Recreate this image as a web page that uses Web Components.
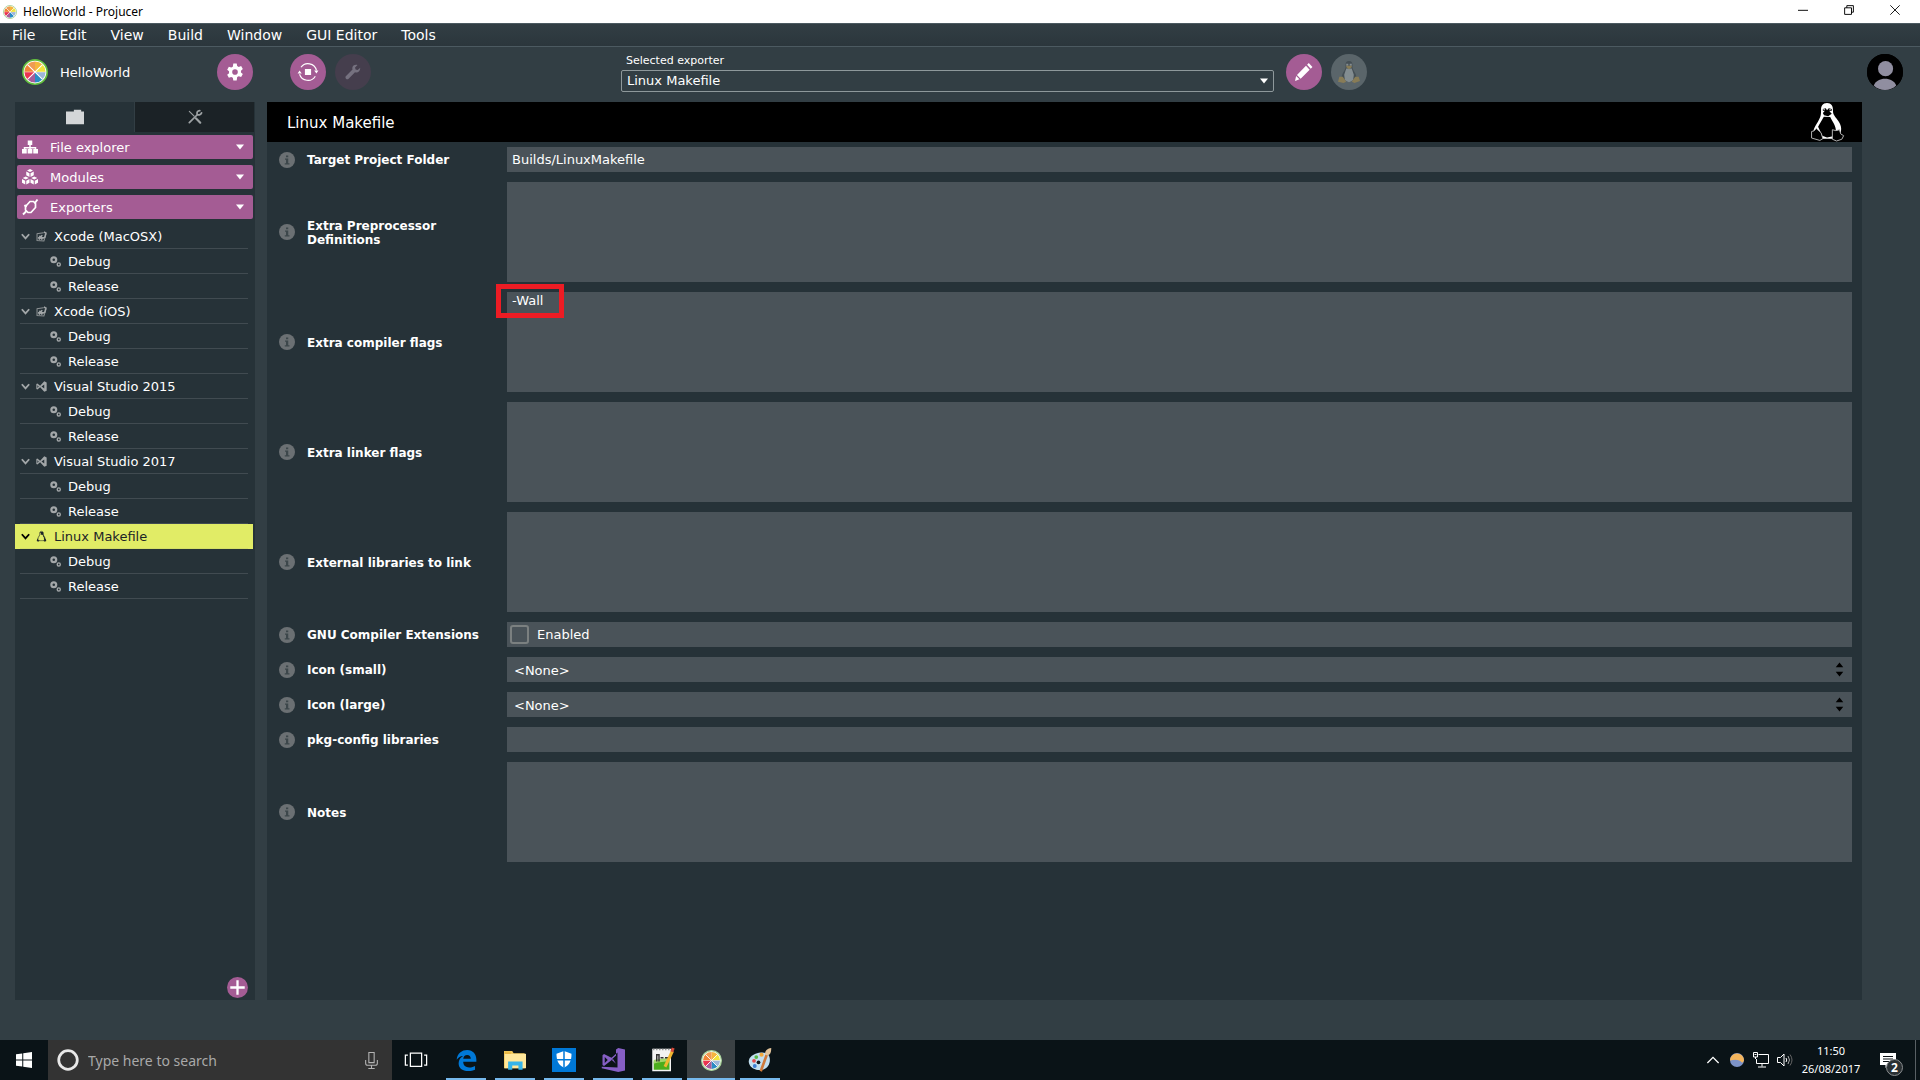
<!DOCTYPE html>
<html lang="en">
<head>
<meta charset="utf-8">
<title>HelloWorld - Projucer</title>
<style>
  html, body { height: 100%; margin: 0; }
  body {
    background: #323e44;
    color: #fff;
    font: 13px/16px "DejaVu Sans", sans-serif;
    overflow: hidden;
  }
</style>
</head>
<body>
<projucer-desktop></projucer-desktop>

<script>
const wedge = ['#f5b63c', '#f2e53c', '#9db6d9', '#2a8cc4', '#a65c9b', '#ea3450', '#f08436', '#f09b52'];
const rim = [[16,3],[25.2,6.8],[29,16],[25.2,25.2],[16,29],[6.8,25.2],[3,16],[6.8,6.8]];
const wheel = outline => `<circle cx="16" cy="16" r="15" fill="#fff" stroke="${outline}" stroke-width="2"/>` +
  rim.map((p, i) => {
    const q = rim[(i + 1) % 8];
    return `<path d="M16 16L${p}A13 13 0 0 1 ${q}Z" fill="${wedge[i]}"/>`;
  }).join('') +
  '<path d="M6.8 6.8L25.2 25.2M25.2 6.8L6.8 25.2" stroke="#fff" stroke-width="1.3"/><path d="M3 16H29" stroke="#fff" stroke-width=".6"/>';

const cube = (x, y) => `<path transform="translate(${x} ${y})" fill="#fff" d="M0-8l6 3-6 3-6-3zM-7.500-3l6.500 3.500V8l-6.500-3.500zM7.500-3L1 .5V8l6.500-3.500z"/>`;
const tuxBody = 'M16 1c-3.400 0-5 2.400-5 5.500 0 3 .3 4.500-1.500 7.500-2 3.300-4.300 6.600-4.300 10.500l3 3.500h15.600l3-3.500c0-3.900-2.300-7.200-4.300-10.500C20.700 11 21 9.500 21 6.500 21 3.400 19.400 1 16 1z';

const ICONS = {
  wheel: wheel('#62bf3d'),
  wheelPale: wheel('#a9d39a'),
  gear: `<path fill="#fff" fill-rule="evenodd" d="M13 1h6l.9 4.300 2.800 1.600 4.200-1.400 3 5.200-3.300 2.900v3.200l3.300 2.900-3 5.200-4.200-1.400-2.800 1.600L19 31h-6l-.9-4.700-2.800-1.600-4.200 1.400-3-5.200 3.300-2.900v-3.200l-3.300-2.900 3-5.200 4.200 1.400 2.800-1.600zM16 11a5 5 0 1 0 0 10 5 5 0 0 0 0-10z"/>`,
  build: `<g fill="none" stroke="#fff" stroke-width="2"><path d="M1 20a15.500 15.500 0 0 0 28 3.500M31 13A15.500 15.500 0 0 0 3.500 7.500"/></g><path fill="#fff" d="M10.500 10.500h11v11h-11zM-2.500 18.500l3.500-5 4 5zM27 13.500h7.500l-3.500 5z"/>`,
  wrench: `<path fill="currentColor" d="M30.500 7.500l-5.200 4.600-4.200-1-1-4L25 1.800c-4-1.500-8.500.3-10 4.200-.7 1.900-.6 3.600 0 5.200L2 24c-1.500 1.500-1.500 3.800 0 5.300 1.400 1.400 3.700 1.400 5.200 0L20 16.500c4.600 2 10.800-1 10.500-9z"/>`,
  folder: `<path fill="#d3d6d8" d="M0 6h14V3h13v3h5v23H0z"/>`,
  tools: `<g fill="none" stroke="#9da2a4" stroke-linecap="round"><path d="M3 3l11 11" stroke-width="2.500"/><path d="M18 19l10 10" stroke-width="5"/><path d="M3 29L20 12" stroke-width="4"/><path d="M27 1.500q-8 1-6 9 7 3 10-4" stroke-width="4"/></g>`,
  hierarchy: `<path fill="#fff" d="M11.500 3h9v9h-9zM14.500 12h3v4h11v4h-3v-1h-8v2h-3v-2h-8v1h-3v-4h11zM0 20h9.500v9H0zM11.300 20h9.400v9h-9.400zM22.500 20H32v9h-9.500z"/>`,
  modules: cube(16, 8) + cube(7.5, 23) + cube(24.5, 23),
  plug: `<g fill="none" stroke="#fff"><path d="M7 15l9-10h7l4 4v8l-9 10h-6l-5-5z" stroke-width="3.400"/><path d="M25 9l6-8M9 24l-7 7M5 12l4 4" stroke-width="3.800"/></g>`,
  caret: `<path fill="currentColor" d="M0 6h32L16 26z"/>`,
  chevron: `<path fill="none" stroke="currentColor" stroke-width="6.500" d="M3 8l13 15L29 8"/>`,
  xcode: `<path fill="none" stroke="#8d9294" stroke-width="3" d="M2 8l20-3M3 8v20l20 1 6-20"/><path fill="none" stroke="#a3a7a9" stroke-width="4.500" d="M9 25l9-13M10 14l8 11M6 20h17M23 3l6 3-4 14"/>`,
  vs: `<path fill="#a3a7a9" fill-rule="evenodd" d="M1 9l3-2 8 6.500L24 1l7 3v24l-7 3-12-12.500L4 25l-3-2zM4 12v8l4-4zM24 10l-8 6 8 6z"/>`,
  tuxOutline: `<path fill="none" stroke="currentColor" stroke-width="2" d="${tuxBody}"/><path fill="currentColor" d="M11.500 3h9l1 9 4 7 1 6-3 2-1-8-4-8h-5l1-3zM4 22l5 6-2 3-5-2zM28 22l-5 6 2 3 5-2z"/><path fill="#e1ec66" d="M13 12h6l3 8-1 7H11l-1-7z"/>`,
  gears: `<g fill="none" stroke="#a3a7a9"><circle cx="11" cy="11" r="7" stroke-width="6.500"/><circle cx="25.500" cy="24.500" r="4.500" stroke-width="4"/></g>`,
  pencil: `<path fill="#fff" d="M24.500 0l6.500 7-3 3-6.500-7zM19.500 5l6.500 7L10 28l-6.500-6.500zM2 23l6 6-8 3z"/>`,
  tuxColour: `<path fill="#454f55" d="M16 0c-3.800 0-5 2.400-5 5.500 0 3.500.3 5-1.500 8-2 3.300-4.300 6.600-4.300 11.500l3 4h15.600l3-4c0-4.900-2.300-8.200-4.300-11.500-1.800-3-1.500-4.500-1.500-8C21 2.400 19.800 0 16 0z"/><path fill="#838d91" d="M12 11h8l3 9-1 8-6 3-6-3-1-8zM12 4h3v3h-3zM17 4h3v3h-3z"/><path fill="#887c56" d="M12 7h8v2l-4 3-4-3zM2 23h5l5 7-4 2-8-2zM30 23h-5l-5 7 4 2 8-3z"/>`,
  tuxWhite: `<path fill="#fff" d="M16 0c-3.700 0-5 2.500-5 5.500 0 4 0 5.500-2 9C7 18.300 4.500 21 4.500 25l6 5h12l5-5c1.500-5-1-9-3.500-12-2.500-3-3-4-3-7.500C21 2.500 19.700 0 16 0z"/><path d="M13.300 11.500l5.400.3C20.500 16 24 19 23.500 25l-2.500 3-5 1-4-1.500L8.500 20c1.500-3 3-5.200 4.800-8.500z"/><path d="M12.500 5l2.500-.5L16 6l1.500-1.500L20 5v1.500L18 7l2 2-3 2.200-3.500-.8-1-2L14 7l-1.500-.5z"/><path fill="#fff" d="M13 5.200h1.200v1H13zM18 5.200h1.200v1H18z"/><path stroke="#b9b9b9" stroke-width=".8" d="M3 24l2-.5L7 21.500l4 3.500 1.500 5-2.500 1.500L3 29.500zM20.500 22.500l3 .8 3-.8 1 3.500 2.500 1.500-1.500 3-4.500 1.500-3.500-1.500z"/>`,
  avatar: `<circle cx="16" cy="16" r="16" fill="#000"/><circle cx="16.500" cy="13" r="6.700" fill="#908ea0"/><path fill="#908ea0" d="M6 28c1.500-4 5.500-6 10-6s8.500 2 10 6c-2.500 2.500-6 4-10 4s-7.500-1.500-10-4z"/>`,
  info: `<circle cx="16" cy="16" r="16" fill="#6b7073"/><path fill="#3d474b" d="M14 7h4.500v3.500H14zM12 13h6.500v9.500H21V25H11.500v-2.500H14v-7h-2z"/>`,
  plus: `<circle cx="16" cy="16" r="16" fill="#a45c94"/><path d="M16 5v22M5 16h22" stroke="#fff" stroke-width="3.500" fill="none"/>`,
  updown: `<path d="M16 1l8 10H8zM16 31l8-10H8z"/>`,
  minimise: `<path d="M0 17h32" stroke="#000" stroke-width="3"/>`,
  restore: `<path d="M2 9h22v21H2zM9 9V2h21v21h-6" stroke="#000" stroke-width="3" fill="none"/>`,
  close: `<path d="M1 1l30 30M31 1L1 31" stroke="#000" stroke-width="2.800" fill="none"/>`,
  windows: `<path fill="#fff" d="M0 4.500l12.500-1.700V15H0zM14.500 2.500L32 0v15H14.500zM0 17h12.500v12.200L0 27.500zM14.500 17H32v15l-17.500-2.500z"/>`,
  cortana: `<circle cx="16" cy="16" r="13.500" fill="none" stroke="#e8e8e8" stroke-width="4"/>`,
  mic: `<g fill="none" stroke="#b4b4b4" stroke-width="2"><path d="M11 1h10v19H11zM5 15v6q0 4 4 4h14q4 0 4-4v-6M16 25v6M10 31h12"/></g>`,
  taskview: `<g fill="none" stroke="#fff" stroke-width="2"><path d="M7 5h18v21H7zM3 8H-1v16h4M29 8h4v16h-4"/></g>`,
  edge: `<path fill="#0078d7" d="M1 15C2 5 9 0 17 0c9 0 14 7 14 14v4H11c0 6 4 8.500 9 8.500 4 0 7-1 9-2.300V30c-3 1.500-6 2-10 2C9 32 4 27 4 20c0-5 3-9 7-11-5 0-8 3-10 6zM11 13.500h11.500c0-3.500-2-6-5.500-6s-5.500 2.500-6 6z"/>`,
  explorer: `<path fill="#f0c657" d="M0 3h12l2 3h16v22H0z"/><path fill="#ffe79b" d="M1 7h31v21H1z"/><path fill="#35b4ea" d="M6 18h21v12h-6v-6h-9v6H6z"/><path fill="#e9b33c" d="M1 5h9v2H1z"/>`,
  defender: `<path fill="#0078d7" d="M0 0h32v32H0z"/><path fill="#fff" d="M16 4l10 3.500c0 9-2 14.500-10 18.500C8 22 6 16.500 6 7.500z"/><path d="M16 4v22M5 15.500h22" stroke="#0078d7" stroke-width="2"/>`,
  studio: `<path fill="#865fc5" fill-rule="evenodd" d="M23 0l9 2v28l-9 2L1 27v-2l21 1V6L14 13 4 8 2 9.500v13L4 24l12-9.500L20 21V2zM5 12v8l4-4zM20 10l-6 5.500 6 5.500z"/>`,
  notepad: `<path fill="#f3f3f3" d="M3 1h25v30H3z"/><path fill="#4bae1c" d="M5 18c8-2 14-2 21-4v15H5z"/><path fill="#a2d66a" d="M5 16c8-2 14-1 21-4v5c-7 2-13 1-21 4z"/><path d="M9 18V9h3v9M14 13h4M20 13h4" stroke="#333" stroke-width="2" fill="none"/><path stroke="#999" stroke-width="2" stroke-dasharray="2 2" d="M4 2h24"/><path d="M20 25L30 4" stroke="#f2b630" stroke-width="4"/><path d="M29 5l2-5" stroke="#d64b3b" stroke-width="4"/>`,
  paint: `<path fill="#c2dff0" d="M17 6c9-1 13 4 12 12S21 31 11 29C3 27-1 20 2 14 5 9 10 7 17 6z"/><circle cx="8" cy="17" r="2.500" fill="#e34a4a"/><circle cx="11" cy="12" r="2.500" fill="#58b947"/><circle cx="18" cy="9" r="2.800" fill="#f3a83a"/><circle cx="9" cy="24" r="2.600" fill="#3f7fd1"/><circle cx="14" cy="19" r="2.500" fill="#10171a"/><path d="M17 31l8-22" stroke="#cf7a3c" stroke-width="3.500"/><path fill="#e2c39a" d="M23 9c-1-5 2-8 8-9 0 5-1 9-5 10z"/>`,
  trayup: `<path fill="none" stroke="#fff" stroke-width="3.500" d="M1 24l15-15 15 15"/>`,
  flux: `<circle cx="16" cy="16" r="16" fill="#7d93c8"/><path fill="#f4b55c" d="M0 17A16 16 0 0 1 32 17c-1 2-2 4-4 5-6-6-13-9-28-5z"/>`,
  network: `<g fill="none" stroke="#fff" stroke-width="2"><path d="M11 5h20v18H7V14M1 1h8v9H1zM5 10v4M18 23v6M10 30h16M3 5h4"/></g>`,
  sound: `<g fill="none" stroke="#fff" stroke-width="2"><path d="M1 11h6l7-7v24l-7-7H1zM18 12q3 4 0 8"/><path d="M22 8q6 8 0 16" stroke="#aaa"/><path d="M26 5q8 11 0 22" stroke="#666"/></g>`,
  action: `<path fill="#fff" d="M0 2h32v24H17l-6 6v-6H0z"/><path d="M6 9h20M6 14h20M6 19h14" stroke="#0a1014" stroke-width="2"/>`
};

const define = (name, css, html) => customElements.define(name, class extends HTMLElement {
  connectedCallback() {
    if (this.shadowRoot) return;
    const root = this.attachShadow({ mode: 'open' });
    root.innerHTML = `<style>*{box-sizing:border-box}button,input,textarea,select{font:inherit;color:inherit;border:0;margin:0;padding:0;background:none;border-radius:0;outline:0}button{cursor:pointer}${css}</style>` +
      (typeof html === 'function' ? html(this) : html);
  }
});
const attr = (el, name, fallback = '') => el.getAttribute(name) ?? fallback;

define('pj-icon', ':host{display:inline-flex;flex:none}svg{display:block;overflow:visible}',
  el => `<svg viewBox="0 0 32 32" width="${attr(el, 'size', 16)}" height="${attr(el, 'size', 16)}" aria-hidden="true">${ICONS[attr(el, 'name')]}</svg>`);

define('title-bar', `
  :host{display:flex;align-items:center;height:23px;background:#fff;color:#000;font:12px/16px "Noto Sans",sans-serif;padding-left:3px}
  span{flex:1;margin-left:6px}
  button{width:46px;height:23px;display:flex;align-items:center;justify-content:center;padding-bottom:3px}
  .buttons{display:flex;margin-right:2px}`,
  `<pj-icon name="wheelPale" size="14"></pj-icon><span><slot></slot></span>
   <div class="buttons"><button aria-label="Minimise"><pj-icon name="minimise" size="10"></pj-icon></button>
   <button aria-label="Restore"><pj-icon name="restore" size="10"></pj-icon></button>
   <button aria-label="Close"><pj-icon name="close" size="10"></pj-icon></button></div>`);

define('menu-bar', `
  :host{display:block;height:24px;border-top:1px solid #4c5a61;border-bottom:1px solid #4c5a61;background:linear-gradient(#323e44,#2b363c);font-size:14px}
  nav{display:flex;height:22px}
  button{padding:0 12px;line-height:22px}`,
  `<nav>${['File', 'Edit', 'View', 'Build', 'Window', 'GUI Editor', 'Tools'].map(t => `<button>${t}</button>`).join('')}</nav>`);

define('round-button', `
  :host{display:block;flex:none}
  button{width:36px;height:36px;border-radius:50%;background:var(--fill,#a45c94);color:#75717f;display:flex;align-items:center;justify-content:center}`,
  el => `<button aria-label="${attr(el, 'label')}"><pj-icon name="${attr(el, 'icon')}" size="${attr(el, 'size', 18)}"></pj-icon></button>`);

define('tool-bar', `
  :host{display:grid;grid-template-columns:606px minmax(200px,653px) auto 1fr;align-items:center;height:55px;padding:0 17px 5px 15px}
  .left{display:flex;align-items:center}
  .name{width:157px;margin:0 0 0 12px;padding-top:2px}
  .left pj-icon{margin-left:7px}
  .left round-button+round-button{margin-left:37px}
  .left round-button+round-button+round-button{margin-left:9px}
  .pick{display:flex;flex-direction:column;position:relative;padding-top:2px}
  label{font-size:11px;line-height:14px;padding-left:5px;margin-bottom:2px}
  select{appearance:none;height:22px;width:100%;border:1px solid #8e989b;border-radius:2px;padding-left:5px}
  .pick pj-icon{position:absolute;right:6px;bottom:7px}
  .right{display:flex;gap:9px;margin-left:12px}
  .user{justify-self:end}`,
  `<div class="left"><pj-icon name="wheel" size="26"></pj-icon><span class="name">HelloWorld</span>
    <round-button label="Project settings" icon="gear"></round-button>
    <round-button label="Build" icon="build"></round-button>
    <round-button label="Stop build" icon="wrench" size="16" style="--fill:#453e4d"></round-button></div>
   <div class="pick"><label for="exporter">Selected exporter</label>
    <select id="exporter"><option>Linux Makefile</option></select><pj-icon name="caret" size="8"></pj-icon></div>
   <div class="right"><round-button label="Edit project" icon="pencil"></round-button>
    <round-button label="Save and open" icon="tuxColour" size="22" style="--fill:#5a656a"></round-button></div>
   <round-button class="user" label="Account" icon="avatar" size="36" style="--fill:#000"></round-button>`);

define('panel-header', `
  :host{display:block}
  button{display:flex;align-items:center;width:100%;height:24px;background:#a45c94;border-radius:2px;padding:0 9px 0 5px;text-align:left}
  span{flex:1;margin-left:12px;padding-top:2px}`,
  el => `<button><pj-icon name="${attr(el, 'icon')}"></pj-icon><span><slot></slot></span><pj-icon name="caret" size="8"></pj-icon></button>`);

define('tree-item', `
  :host{display:block}
  button{display:flex;align-items:center;width:100%;height:25px;padding-left:1px;text-align:left}
  div{margin:0 7px 0 5px;border-bottom:1px solid #414b51;height:25px}
  .arrow{color:#a3a7a9;margin-right:6px}
  .kind{margin-right:7px}
  .config{padding-left:30px}
  :host([selected]){background:#e1ec66;color:#1c2427;margin-right:2px}
  :host([selected]) div{border-color:#d5df68;margin-right:5px}
  :host([selected]) .arrow{color:#000}`,
  el => el.hasAttribute('config')
    ? `<div><button class="config"><pj-icon class="kind" name="gears" size="11"></pj-icon><slot></slot></button></div>`
    : `<div><button><pj-icon class="arrow" name="chevron" size="9"></pj-icon><pj-icon class="kind" name="${attr(el, 'icon')}" size="11"></pj-icon><slot></slot></button></div>`);

const exporters = [['Xcode (MacOSX)', 'xcode'], ['Xcode (iOS)', 'xcode'], ['Visual Studio 2015', 'vs'], ['Visual Studio 2017', 'vs'], ['Linux Makefile', 'tuxOutline']];
define('side-panel', `
  :host{display:flex;flex-direction:column;width:240px;flex:none;background:#263238}
  .tabs{display:flex;gap:1px;height:30px;margin-right:1px;background:#323e44}
  .tabs button{flex:1;background:#1b2226;display:flex;align-items:center;justify-content:center}
  .tabs button[aria-selected=true]{background:#263238}
  .heads{display:flex;flex-direction:column;gap:6px;padding:3px 2px 5px}
  .tree{flex:1}
  .add{display:flex;align-self:flex-end;margin:0 7px 2px 0}`,
  `<div class="tabs" role="tablist"><button role="tab" aria-selected="true" aria-label="Project"><pj-icon name="folder" size="18"></pj-icon></button><button role="tab" aria-selected="false" aria-label="Build"><pj-icon name="tools" size="14"></pj-icon></button></div>
   <div class="heads"><panel-header icon="hierarchy">File explorer</panel-header><panel-header icon="modules">Modules</panel-header><panel-header icon="plug">Exporters</panel-header></div>
   <div class="tree">${exporters.map(([n, i]) => `<tree-item icon="${i}"${n[0] === 'L' ? ' selected' : ''}>${n}</tree-item><tree-item config>Debug</tree-item><tree-item config>Release</tree-item>`).join('')}</div>
   <button class="add" aria-label="Add exporter"><pj-icon name="plus" size="21"></pj-icon></button>`);

const controls = {
  text: v => `<input class="field" id="f" type="text" value="${v}">`,
  area: v => `<textarea class="field" id="f" spellcheck="false">${v}</textarea>`,
  choice: v => `<select class="field" id="f"><option>${v}</option></select><pj-icon class="step" name="updown" size="15"></pj-icon>`,
  check: v => `<span class="field check"><input type="checkbox" id="f"><label for="f">${v}</label></span>`
};
define('property-row', `
  :host{display:flex;align-items:center}
  .label{width:200px;flex:none;padding:1px 20px 0 0;margin-left:12px;font:bold 12px/14px "DejaVu Sans",sans-serif}
  .box{flex:1;position:relative;display:flex}
  .field{display:block;width:100%;height:25px;background:#4a5359;padding:0 5px}
  textarea.field{height:100px;resize:none;padding:1px 5px;line-height:16px}
  select.field{appearance:none;padding:2px 7px 0}
  .step{position:absolute;right:5px;top:5px;color:#000}
  .check{display:flex;align-items:center;gap:8px;padding:0 3px}
  .check input{appearance:none;width:19px;height:19px;border:2px solid #7b8080;border-radius:3px}
  .mark{position:absolute;left:-11px;top:-8px;width:68px;height:34px;border:5px solid #ed1c24;pointer-events:none}`,
  el => {
    const type = attr(el, 'type', 'text');
    const name = attr(el, 'name');
    const caption = type === 'check' ? `<span class="label">${name}</span>` : `<label class="label" for="f">${name}</label>`;
    return `<pj-icon name="info"></pj-icon>${caption}<div class="box">${controls[type](attr(el, 'value').replace(/</g, '&lt;'))}${el.hasAttribute('marked') ? '<span class="mark"></span>' : ''}</div>`;
  });

define('exporter-settings', `
  :host{display:block;flex:1;min-width:0;background:#263238}
  header{display:flex;align-items:center;justify-content:space-between;height:40px;background:#000;padding:0 16px 0 20px}
  h1{font:15px/20px "DejaVu Sans",sans-serif;margin:0;padding-top:2px}
  form{display:flex;flex-direction:column;gap:10px;padding:5px 10px 0 12px}`,
  `<header><h1>Linux Makefile</h1><pj-icon name="tuxWhite" size="38"></pj-icon></header>
   <form>
    <property-row name="Target Project Folder" value="Builds/LinuxMakefile"></property-row>
    <property-row name="Extra Preprocessor Definitions" type="area"></property-row>
    <property-row name="Extra compiler flags" type="area" value="-Wall" marked></property-row>
    <property-row name="Extra linker flags" type="area"></property-row>
    <property-row name="External libraries to link" type="area"></property-row>
    <property-row name="GNU Compiler Extensions" type="check" value="Enabled"></property-row>
    <property-row name="Icon (small)" type="choice" value="&lt;None&gt;"></property-row>
    <property-row name="Icon (large)" type="choice" value="&lt;None&gt;"></property-row>
    <property-row name="pkg-config libraries"></property-row>
    <property-row name="Notes" type="area"></property-row>
   </form>`);

define('task-button', `
  :host{display:block}
  button{width:48px;height:40px;display:flex;align-items:center;justify-content:center;position:relative}
  :host([running]) button::after{content:"";position:absolute;left:4px;right:4px;bottom:0;height:2px;background:#76b9ed}
  :host([active]) button{background:#3b4144}
  :host([active]) button::after{left:0;right:0}`,
  el => `<button aria-label="${attr(el, 'label')}"><pj-icon name="${attr(el, 'icon')}" size="${attr(el, 'size', 24)}"></pj-icon></button>`);

define('task-bar', `
  :host{display:flex;height:40px;background:#0a1317;font-family:"Noto Sans",sans-serif}
  .search{display:flex;align-items:center;width:344px;background:#333;padding:0 12px 0 9px;color:#a9a9a9}
  .search input{flex:1;min-width:0;margin-left:9px;padding-top:2px;font:14px/20px "Noto Sans",sans-serif}
  .search input::placeholder{color:#a9a9a9;opacity:1}
  .apps{display:flex;gap:1px;margin-left:2px;flex:1}
  .tray{display:flex;align-items:center}
  .icons{display:grid;grid-template-columns:repeat(4,24px);justify-items:center;align-items:center}
  .clock{font-size:11px;line-height:18px;text-align:center;width:68px}
  .action{position:relative;width:46px;height:40px;display:flex;align-items:center;justify-content:center}
  .action b{position:absolute;left:21px;top:19px;width:17px;height:17px;border:1px solid #8a8e90;border-radius:50%;background:#2a3033;font:bold 12px/15px "Noto Sans",sans-serif;text-align:center;color:#fff}
  .desk{width:5px;height:40px;margin-left:4px;border-left:1px solid #596064}`,
  `<task-button label="Start" icon="windows" size="16"></task-button>
   <div class="search"><pj-icon name="cortana" size="22"></pj-icon><input type="text" aria-label="Search" placeholder="Type here to search"><pj-icon name="mic" size="17"></pj-icon></div>
   <task-button label="Task view" icon="taskview" size="20"></task-button>
   <div class="apps">
    <task-button running label="Edge" icon="edge" size="21"></task-button>
    <task-button running label="File Explorer" icon="explorer" size="22"></task-button>
    <task-button running label="Defender" icon="defender"></task-button>
    <task-button running label="Visual Studio" icon="studio"></task-button>
    <task-button running label="Notepad++" icon="notepad"></task-button>
    <task-button running active label="Projucer" icon="wheelPale" size="21"></task-button>
    <task-button running label="Paint" icon="paint"></task-button>
   </div>
   <div class="tray"><div class="icons"><pj-icon name="trayup" size="12"></pj-icon><pj-icon name="flux" size="14"></pj-icon><pj-icon name="network" size="16"></pj-icon><pj-icon name="sound" size="16"></pj-icon></div>
    <div class="clock">11:50<br>26/08/2017</div>
    <button class="action" aria-label="Notifications"><pj-icon name="action" size="16"></pj-icon><b>2</b></button>
    <div class="desk"></div></div>`);

define('projucer-desktop', `
  :host{display:flex;flex-direction:column;height:100vh}
  main{flex:1;min-height:0;display:flex;gap:12px;padding:0 58px 40px 15px}`,
  `<title-bar>HelloWorld - Projucer</title-bar><menu-bar></menu-bar><tool-bar></tool-bar>
   <main><side-panel></side-panel><exporter-settings></exporter-settings></main>
   <task-bar></task-bar>`);
</script>
</body>
</html>
